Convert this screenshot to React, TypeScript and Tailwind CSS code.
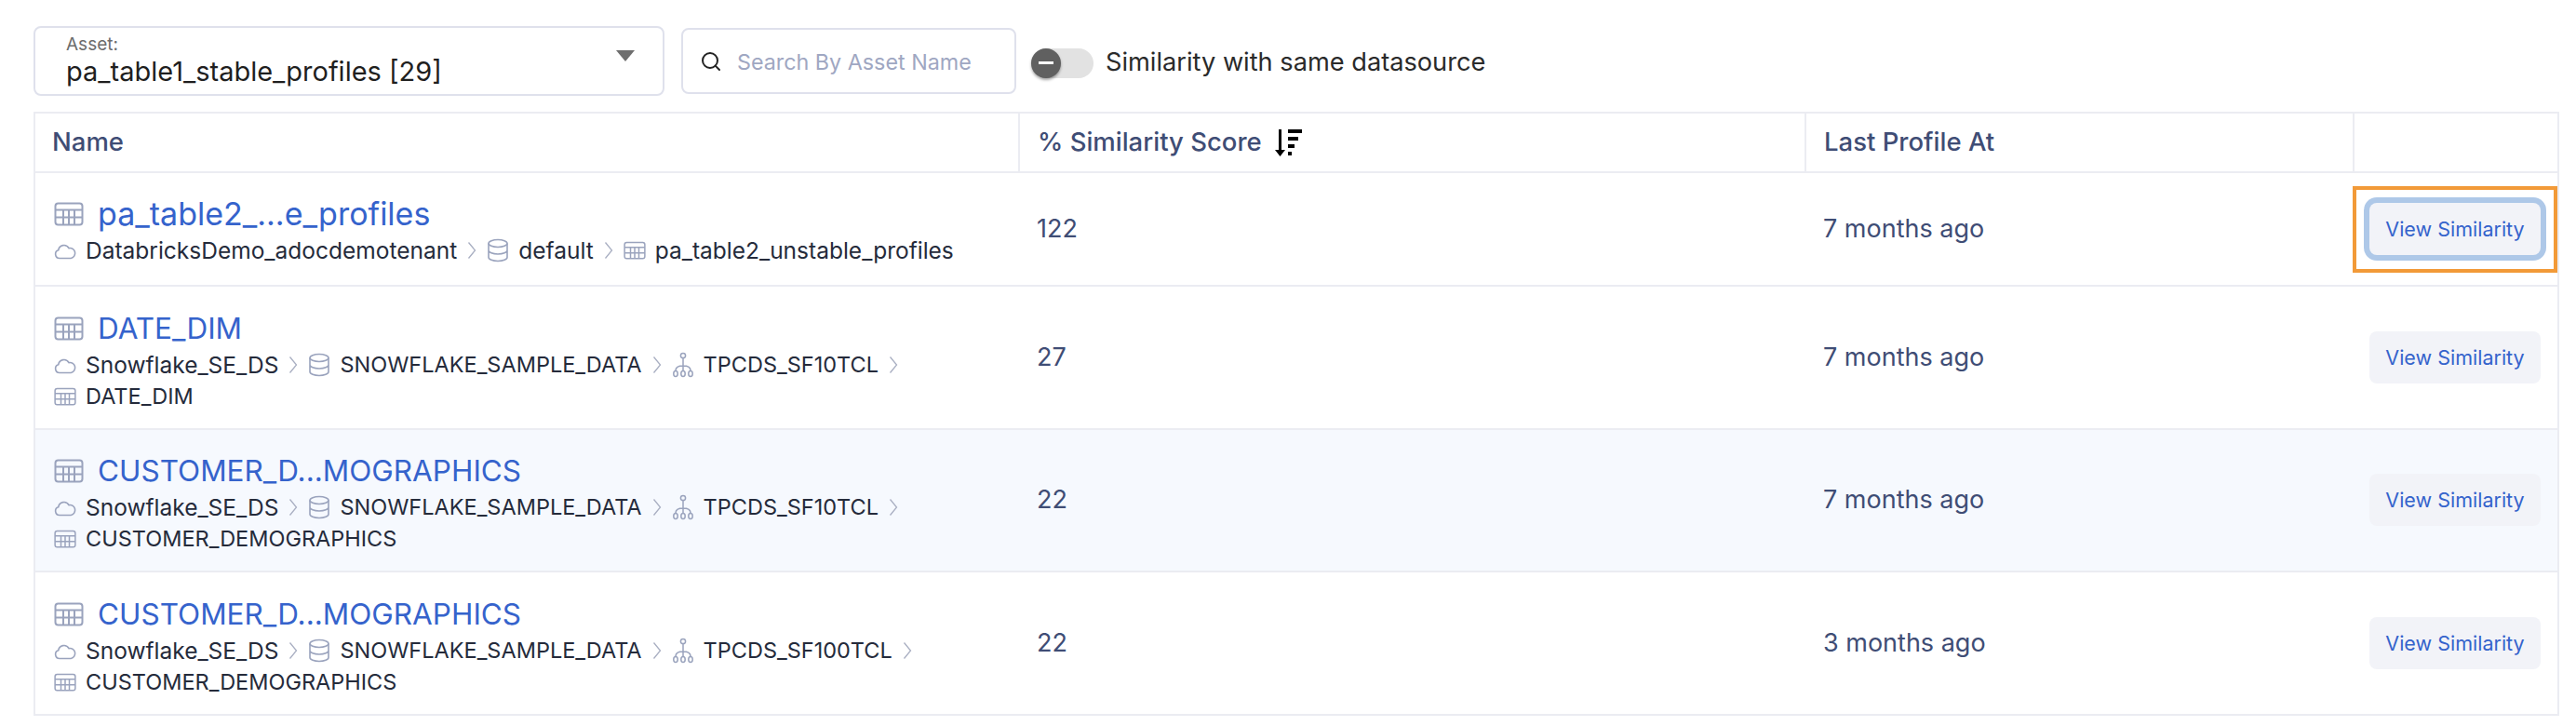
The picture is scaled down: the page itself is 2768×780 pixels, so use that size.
import { Search } from "lucide-react";

type Crumb = { kind: "cloud" | "db" | "schema" | "table"; label: string };

type Row = {
  title: string;
  score: string;
  last: string;
  crumbs: Crumb[];
};

const rows: Row[] = [
  {
    title: "pa_table2_...e_profiles",
    score: "122",
    last: "7 months ago",
    crumbs: [
      { kind: "cloud", label: "DatabricksDemo_adocdemotenant" },
      { kind: "db", label: "default" },
      { kind: "table", label: "pa_table2_unstable_profiles" },
    ],
  },
  {
    title: "DATE_DIM",
    score: "27",
    last: "7 months ago",
    crumbs: [
      { kind: "cloud", label: "Snowflake_SE_DS" },
      { kind: "db", label: "SNOWFLAKE_SAMPLE_DATA" },
      { kind: "schema", label: "TPCDS_SF10TCL" },
      { kind: "table", label: "DATE_DIM" },
    ],
  },
  {
    title: "CUSTOMER_D...MOGRAPHICS",
    score: "22",
    last: "7 months ago",
    crumbs: [
      { kind: "cloud", label: "Snowflake_SE_DS" },
      { kind: "db", label: "SNOWFLAKE_SAMPLE_DATA" },
      { kind: "schema", label: "TPCDS_SF10TCL" },
      { kind: "table", label: "CUSTOMER_DEMOGRAPHICS" },
    ],
  },
  {
    title: "CUSTOMER_D...MOGRAPHICS",
    score: "22",
    last: "3 months ago",
    crumbs: [
      { kind: "cloud", label: "Snowflake_SE_DS" },
      { kind: "db", label: "SNOWFLAKE_SAMPLE_DATA" },
      { kind: "schema", label: "TPCDS_SF100TCL" },
      { kind: "table", label: "CUSTOMER_DEMOGRAPHICS" },
    ],
  },
];

// Inter's capitals run wider than its lowercase compared to the original font
const isCaps = (s: string) => s === s.toUpperCase();

function TableIcon({ className }: { className: string }) {
  return (
    <svg viewBox="0 0 32 26" fill="none" stroke="#9aa3bd" strokeWidth="2" className={className}>
      <rect x="1.5" y="1.5" width="29" height="23" rx="3" />
      <path d="M1.5 8.5h29M1.5 16.5h29M10 8.5v16M16 8.5v16M22 8.5v16" />
    </svg>
  );
}

function CrumbIcon({ kind }: { kind: Crumb["kind"] }) {
  if (kind === "table") return <TableIcon className="w-6 h-[22px] shrink-0" />;
  if (kind === "cloud") {
    return (
      <svg viewBox="0 0 24 20" fill="none" stroke="#9aa3bd" strokeWidth="1.6" className="w-6 h-5 shrink-0">
        <path d="M6 18.5a4.5 4.5 0 0 1-1.2-8.8A6 6 0 0 1 16 7.6a5.4 5.4 0 0 1 2.2 10.900z" />
      </svg>
    );
  }
  if (kind === "db") {
    return (
      <svg viewBox="0 0 24 26" fill="none" stroke="#9aa3bd" strokeWidth="1.6" className="w-6 h-[26px] shrink-0">
        <ellipse cx="12" cy="5.5" rx="10" ry="4" />
        <path d="M2 5.5v15c0 2.2 4.5 4 10 4s10-1.800 10-4v-15M2 13c0 2.200 4.500 4 10 4s10-1.800 10-4" />
      </svg>
    );
  }
  return (
    <svg viewBox="0 0 24 28" fill="none" stroke="#9aa3bd" strokeWidth="1.5" className="w-6 h-7 shrink-0">
      <circle cx="12" cy="4" r="2.6" />
      <path d="M12 6.600V15M12 15c-5 0-8 1.500-8 5M12 15c5 0 8 1.500 8 5M12 15v5" />
      <ellipse cx="4" cy="23.500" rx="2.200" ry="3" />
      <ellipse cx="12" cy="23.500" rx="2.200" ry="3" />
      <ellipse cx="20" cy="23.500" rx="2.200" ry="3" />
    </svg>
  );
}

function Chevron() {
  return (
    <svg viewBox="0 0 10 20" fill="none" stroke="#a9afc2" strokeWidth="1.300" className="w-2.5 h-5 shrink-0 mx-[11px]">
      <path d="M1.500 1.500 8.500 10l-7 8.500" />
    </svg>
  );
}

function SortIcon() {
  return (
    <svg viewBox="0 0 30 30" fill="#000000" className="w-[30px] h-[30px] ml-[14px]">
      <path d="M4 1h3v22h4l-5.500 7L0 23h4z" />
      <path d="M14 1h15v4H14zM14 9h11v4H14zM14 17h7v4h-7zM14 25h4v4h-4z" />
    </svg>
  );
}

function ViewButton({ focused }: { focused: boolean }) {
  return (
    <button
      className={`w-[184px] h-14 rounded-lg bg-[#f2f3f8] text-[#3563cc] text-[21.5px] ${
        focused ? "ring-[6px] ring-[#aec8e8]" : ""
      }`}
    >
      View Similarity
    </button>
  );
}

export default function App() {
  return (
    <div className="w-[2768px] h-[780px] overflow-hidden bg-white pl-9 pt-7 font-['Inter',sans-serif]">
      <div className="flex items-center h-[75px]">
        <div className="w-[678px] h-[75px] border-2 border-[#dfe1ec] rounded-lg pl-[33px] pr-[30px] flex items-center justify-between">
          <div>
            <div className="text-[19px] leading-[22px] text-[#6d6d6d]">Asset:</div>
            <div className="text-[29px] leading-[34px] mt-px text-[#1f1f1f]">pa_table1_stable_profiles [29]</div>
          </div>
          <div className="w-0 h-0 border-x-[10px] border-x-transparent border-t-[12px] border-t-[#6e6e6e] mb-3" />
        </div>
        <div className="ml-[18px] w-[360px] h-[71px] border-2 border-[#dfe1ec] rounded-lg flex items-center pl-[18px]">
          <Search className="w-6 h-6 text-[#222222]" strokeWidth={2} />
          <span className="ml-4 text-[23.300px] mt-1 text-[#9fa7c2]">Search By Asset Name</span>
        </div>
        <div className="ml-[16px] mt-1 relative w-[67px] h-8 rounded-full bg-[#e2e2e2]">
          <div className="absolute left-0 top-0 w-8 h-8 rounded-full bg-[#606060] shadow-[0_2px_3px_rgba(0,0,0,0.35)] flex items-center justify-center">
            <div className="w-4 h-[3px] bg-white" />
          </div>
        </div>
        <span className="ml-[13px] mt-1 text-[27.200px] text-[#2a2a2a]">Similarity with same datasource</span>
      </div>

      <div className="mt-[17px] w-[2714px] border-2 border-b-0 border-[#ebecf2]">
        <div className="flex h-16 border-b-2 border-[#ebecf2] text-[27.500px] font-medium text-[#3f4d75]">
          <div className="w-[1056px] flex items-center pl-[18px]">Name</div>
          <div className="w-[845px] flex items-center pl-[19px] border-l-2 border-[#ebecf2]">
            % Similarity Score
            <SortIcon />
          </div>
          <div className="w-[589px] flex items-center pl-[19px] border-l-2 border-[#ebecf2]">Last Profile At</div>
          <div className="flex-1 border-l-2 border-[#ebecf2]" />
        </div>

        {rows.map((row, i) => (
          <div
            key={i}
            className={`flex items-center border-b-2 border-[#ebecf2] ${i === 0 ? "h-[122px]" : "h-[153.5px]"} ${
              i === 2 ? "bg-[#f6f9fe]" : ""
            }`}
          >
            <div className={`w-[1056px] pl-5 pr-[60px] ${i === 0 ? "pt-1" : "pt-2"}`}>
              <div className="flex items-center">
                <TableIcon className="w-8 h-[26px] shrink-0" />
                <a className={`ml-[15px] leading-[40px] text-[#3563cc] ${isCaps(row.title) ? "text-[31.500px]" : "text-[34px]"}`}>
                  {row.title}
                </a>
              </div>
              <div className="flex flex-wrap items-center mt-[2px] leading-[34px] text-[#252b3b]">
                {row.crumbs.map((crumb, j) => (
                  <div key={j} className="flex items-center">
                    <CrumbIcon kind={crumb.kind} />
                    <span className={`ml-[10px] ${isCaps(crumb.label) ? "text-[23.500px]" : "text-[24.500px]"}`}>
                      {crumb.label}
                    </span>
                    {j < row.crumbs.length - 1 && <Chevron />}
                  </div>
                ))}
              </div>
            </div>
            <div className="w-[845px] pl-[20px] text-[27px] text-[#3f4d75]">{row.score}</div>
            <div className="w-[589px] pl-[20px] text-[27px] text-[#3f4d75]">{row.last}</div>
            <div className="flex-1 flex justify-center">
              {i === 0 ? (
                <div className="w-[220px] h-[93px] border-4 border-[#f29a38] flex items-center justify-center">
                  <ViewButton focused />
                </div>
              ) : (
                <ViewButton focused={false} />
              )}
            </div>
          </div>
        ))}
      </div>
    </div>
  );
}
